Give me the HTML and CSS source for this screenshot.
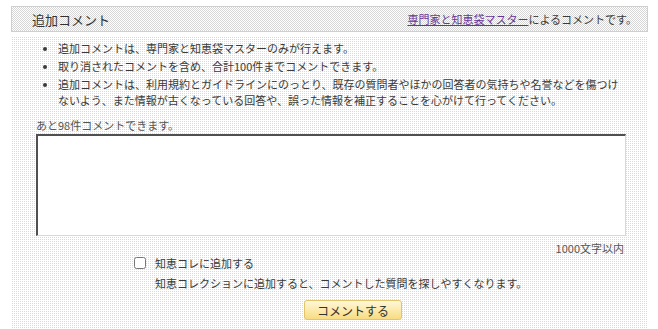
FILE: index.html
```html
<!DOCTYPE html>
<html>
<head>
    <title>追加コメント</title>
    <meta http-equiv="Content-Type" content="text/html; charset=utf-8" />
    <link rel="stylesheet" href="styles.css">
</head>

<body>
    <div class="comment-box">
        <div class="comment-head">
            <h2>追加コメント</h2>
            <p class="by"><a href="#">専門家と知恵袋マスター</a>によるコメントです。</p>
        </div>

        <form class="comment-body" method="post" action="#">
            <ul class="notes">
                <li>追加コメントは、専門家と知恵袋マスターのみが行えます。</li>
                <li>取り消されたコメントを含め、合計100件までコメントできます。</li>
                <li>追加コメントは、利用規約とガイドラインにのっとり、既存の質問者やほかの回答者の気持ちや名誉などを傷つけないよう、また情報が古くなっている回答や、誤った情報を補正することを心がけて行ってください。</li>
            </ul>

            <p class="remain">あと98件コメントできます。</p>
            <textarea name="comment"></textarea>
            <p class="limit">1000文字以内</p>

            <div class="collection">
                <label><input type="checkbox" name="chiebukuro"> 知恵コレに追加する</label>
                <p>知恵コレクションに追加すると、コメントした質問を探しやすくなります。</p>
            </div>

            <div class="actions">
                <button type="submit" class="btn-comment">コメントする</button>
            </div>
        </form>
    </div>
</body>
</html>
```

FILE: styles.css
```css
body {
    margin: 0;
    padding: 6px 10px 0 11px;
    font-family: "Noto Sans CJK JP", sans-serif;
    font-size: 11px;
    color: #3a3a3a;
    background-color: #fff;
}
.comment-box {
    width: 637px;
}
.comment-head {
    display: flex;
    justify-content: space-between;
    align-items: center;
    height: 24px;
    padding: 0 10px 0 20px;
    border: 1px solid #cfcfcf;
    background-color: #fff;
    background-image: repeating-conic-gradient(#d6d6d6 0 25%, #fff 0 50%);
    background-size: 2px 2px;
}
.comment-head h2 {
    margin: 0;
    font-size: 13px;
    font-weight: normal;
    color: #333;
}
.comment-head .by {
    margin: 0;
    font-size: 11px;
}
.comment-head a {
    color: #663399;
}
.comment-body {
    margin-top: 5px;
    padding: 3px 22px 8px 25px;
    background-color: #fff;
    background-image: repeating-conic-gradient(#dadada 0 25%, #fff 0 100%);
    background-size: 2px 2px;
}
.notes {
    margin: 0;
    padding: 0 0 0 22px;
    line-height: 16px;
}
.notes li {
    margin-bottom: 2px;
}
.remain {
    margin: 9px 0 1px;
    line-height: 16px;
    color: #555;
}
textarea {
    display: block;
    width: 590px;
    height: 102px;
    margin: 0;
    padding: 2px;
    box-sizing: border-box;
    border-top: 2px solid #505050;
    border-left: 2px solid #505050;
    border-right: 1px solid #d8d8d8;
    border-bottom: 1px solid #d8d8d8;
    background: #fff;
    resize: none;
    font-family: inherit;
}
.limit {
    margin: 4px 0 0;
    width: 588px;
    text-align: right;
    line-height: 16px;
    color: #555;
}
.collection {
    margin: -3px 0 0 98px;
    line-height: 20px;
}
.collection label {
    display: flex;
    align-items: center;
    gap: 7px;
}
.collection input {
    width: 12px;
    height: 12px;
    margin: 0 2px 0 0;
}
.collection p {
    margin: 0 0 0 21px;
}
.actions {
    margin: 7px 0 0 268px;
}
.btn-comment {
    width: 98px;
    height: 20px;
    padding: 0;
    font-family: inherit;
    font-size: 12px;
    color: #333;
    border: 1px solid #e3c46a;
    border-radius: 3px;
    background: linear-gradient(#fff8d8, #f8dc82);
    cursor: pointer;
}
```
